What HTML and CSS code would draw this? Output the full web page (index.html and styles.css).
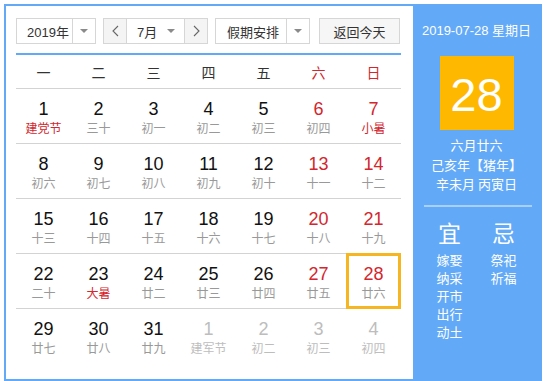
FILE: index.html
```html
<!DOCTYPE html>
<html lang="zh">
<head>
<meta charset="utf-8">
<link rel="stylesheet" href="styles.css">
</head>
<body>
<div class="frame">
  <div class="main">
    <div class="controls">
      <div class="select year"><span class="label">2019年</span><span class="drop"><i class="tri"></i></span></div>
      <div class="month-group">
        <span class="nav"><svg width="7" height="12" viewBox="0 0 7 12"><polyline points="6,1 1,6 6,11" fill="none" stroke="#666" stroke-width="1.1"/></svg></span>
        <span class="month"><span class="label">7月</span><i class="tri"></i></span>
        <span class="nav"><svg width="7" height="12" viewBox="0 0 7 12"><polyline points="1,1 6,6 1,11" fill="none" stroke="#666" stroke-width="1.1"/></svg></span>
      </div>
      <div class="select holiday"><span class="label">假期安排</span><span class="drop"><i class="tri"></i></span></div>
      <div class="today-btn">返回今天</div>
    </div>
    <div class="grid">
      <div class="wd">一</div><div class="wd">二</div><div class="wd">三</div><div class="wd">四</div><div class="wd">五</div><div class="wd red">六</div><div class="wd red">日</div>

      <div class="day"><b>1</b><span class="red">建党节</span></div>
      <div class="day"><b>2</b><span>三十</span></div>
      <div class="day"><b>3</b><span>初一</span></div>
      <div class="day"><b>4</b><span>初二</span></div>
      <div class="day"><b>5</b><span>初三</span></div>
      <div class="day"><b class="red">6</b><span>初四</span></div>
      <div class="day"><b class="red">7</b><span class="red">小暑</span></div>

      <div class="day"><b>8</b><span>初六</span></div>
      <div class="day"><b>9</b><span>初七</span></div>
      <div class="day"><b>10</b><span>初八</span></div>
      <div class="day"><b>11</b><span>初九</span></div>
      <div class="day"><b>12</b><span>初十</span></div>
      <div class="day"><b class="red">13</b><span>十一</span></div>
      <div class="day"><b class="red">14</b><span>十二</span></div>

      <div class="day"><b>15</b><span>十三</span></div>
      <div class="day"><b>16</b><span>十四</span></div>
      <div class="day"><b>17</b><span>十五</span></div>
      <div class="day"><b>18</b><span>十六</span></div>
      <div class="day"><b>19</b><span>十七</span></div>
      <div class="day"><b class="red">20</b><span>十八</span></div>
      <div class="day"><b class="red">21</b><span>十九</span></div>

      <div class="day"><b>22</b><span>二十</span></div>
      <div class="day"><b>23</b><span class="red">大暑</span></div>
      <div class="day"><b>24</b><span>廿二</span></div>
      <div class="day"><b>25</b><span>廿三</span></div>
      <div class="day"><b>26</b><span>廿四</span></div>
      <div class="day"><b class="red">27</b><span>廿五</span></div>
      <div class="day today"><b class="red">28</b><span>廿六</span></div>

      <div class="day last"><b>29</b><span>廿七</span></div>
      <div class="day last"><b>30</b><span>廿八</span></div>
      <div class="day last"><b>31</b><span>廿九</span></div>
      <div class="day last other"><b>1</b><span>建军节</span></div>
      <div class="day last other"><b>2</b><span>初二</span></div>
      <div class="day last other"><b>3</b><span>初三</span></div>
      <div class="day last other"><b>4</b><span>初四</span></div>
    </div>
  </div>
  <div class="side">
    <div class="date">2019-07-28 星期日</div>
    <div class="bigday">28</div>
    <div class="lunar">
      <div>六月廿六</div>
      <div>己亥年【猪年】</div>
      <div>辛未月 丙寅日</div>
    </div>
    <div class="sep"></div>
    <div class="yiji">
      <div class="col">
        <div class="head">宜</div>
        <div>嫁娶</div><div>纳采</div><div>开市</div><div>出行</div><div>动土</div>
      </div>
      <div class="col">
        <div class="head">忌</div>
        <div>祭祀</div><div>祈福</div>
      </div>
    </div>
  </div>
</div>
</body>
</html>
```

FILE: styles.css
```css
html, body {
  margin: 0;
  padding: 0;
  background: #fff;
}
body {
  font-family: "Liberation Sans", "Noto Sans CJK SC", sans-serif;
  color: #333;
}
.frame {
  margin: 4px 0 0 4px;
  width: 534px;
  height: 373px;
  border: 2px solid #62a9f7;
  display: flex;
}
.main {
  width: 387px;
  padding: 12px 10px 0 10px;
  background: #fff;
}
.controls {
  display: flex;
  height: 26px;
  font-size: 13px;
}
.select, .month-group, .today-btn {
  box-sizing: border-box;
  height: 26px;
  border: 1px solid #d6d6d6;
  display: flex;
  align-items: stretch;
}
.label {
  display: flex;
  align-items: center;
}
.year {
  width: 80px;
}
.year .label {
  width: 55px;
  padding-left: 10px;
  box-sizing: border-box;
}
.drop {
  flex: 1;
  border-left: 1px solid #d6d6d6;
  display: flex;
  align-items: center;
  justify-content: center;
}
.tri {
  display: inline-block;
  width: 0;
  height: 0;
  border-left: 4px solid transparent;
  border-right: 4px solid transparent;
  border-top: 4px solid #8a8a8a;
}
.month-group {
  margin-left: 7px;
  width: 105px;
}
.nav {
  width: 22px;
  background: #f4f4f4;
  display: flex;
  align-items: center;
  justify-content: center;
}
.month {
  flex: 1;
  border-left: 1px solid #d6d6d6;
  border-right: 1px solid #d6d6d6;
  display: flex;
  align-items: center;
  padding: 0 9px 0 10px;
  justify-content: space-between;
}
.holiday {
  margin-left: 7px;
  width: 95px;
}
.holiday .label {
  width: 70px;
  padding-left: 11px;
  box-sizing: border-box;
}
.today-btn {
  margin-left: 9px;
  width: 81px;
  background: #f6f6f6;
  align-items: center;
  justify-content: center;
}
.grid {
  margin-top: 9px;
  border-top: 2px solid #62a9f7;
  display: grid;
  grid-template-columns: repeat(7, 1fr);
  width: 385px;
}
.wd {
  height: 33px;
  border-bottom: 1px solid #d3d3d3;
  display: flex;
  align-items: center;
  justify-content: center;
  font-size: 14px;
  font-family: "Noto Sans CJK SC", sans-serif;
  color: #333;
}
.red {
  color: #d3262e !important;
}
.day {
  position: relative;
  border-bottom: 1px solid #d3d3d3;
  display: flex;
  flex-direction: column;
  align-items: center;
  padding-top: 10px;
  height: 44px;
}
.day b {
  font-weight: normal;
  font-size: 18px;
  line-height: 21px;
  color: #111;
}
.day span {
  font-size: 12px;
  line-height: 16px;
  color: #999;
  font-family: "Noto Sans CJK SC", sans-serif;
}
.day.last {
  border-bottom: none;
}
.day.other b, .day.other span {
  color: #bdbdbd;
}
.today::after {
  content: "";
  position: absolute;
  top: -1px;
  bottom: -1px;
  left: 0;
  right: 0;
  border: 3px solid #f5b622;
}
.side {
  flex: 1;
  background: #62a9f7;
  color: #fff;
  display: flex;
  flex-direction: column;
  align-items: center;
  padding-top: 15px;
  font-family: "Liberation Sans", "Noto Sans CJK SC", sans-serif;
}
.date {
  font-size: 13px;
  line-height: 20px;
}
.bigday {
  margin-top: 15px;
  width: 74px;
  height: 74px;
  background: #ffb800;
  display: flex;
  align-items: center;
  justify-content: center;
  font-size: 47px;
  padding-top: 2px;
  box-sizing: border-box;
}
.lunar {
  margin-top: 5px;
  font-size: 13px;
  line-height: 19.5px;
  text-align: center;
  font-family: "Noto Sans CJK SC", sans-serif;
}
.sep {
  margin-top: 11px;
  align-self: stretch;
  margin-left: 11px;
  margin-right: 8px;
  height: 2px;
  background: #a9d0fb;
}
.yiji {
  display: flex;
  width: 108px;
  margin-top: 10px;
  font-family: "Noto Sans CJK SC", sans-serif;
}
.col {
  flex: 1;
  display: flex;
  flex-direction: column;
  align-items: center;
  font-size: 13px;
  line-height: 18.2px;
}
.col .head {
  font-size: 23px;
  line-height: 30px;
  margin-bottom: 4px;
}
```
